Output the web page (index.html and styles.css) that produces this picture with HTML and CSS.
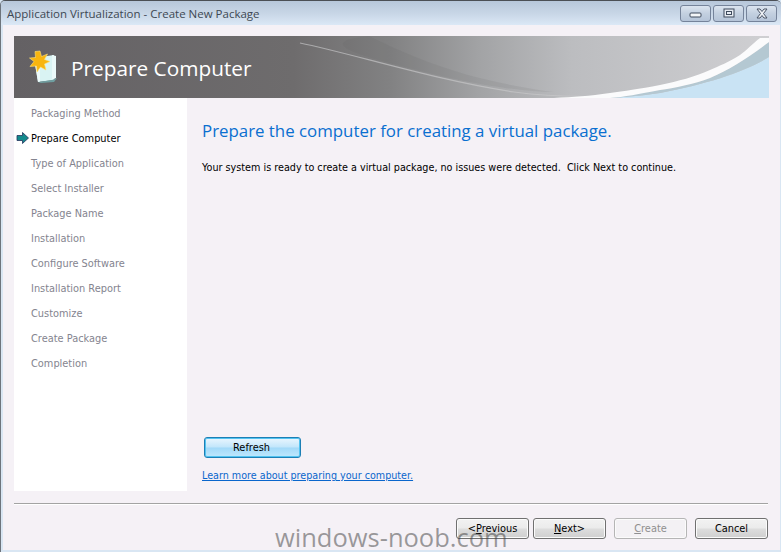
FILE: index.html
```html
<!DOCTYPE html>
<html lang="en">
<head>
<meta charset="utf-8">
<title>Application Virtualization - Create New Package</title>
<link rel="stylesheet" href="styles.css">
</head>
<body>
<div class="window">
  <div class="titlebar">
    <span class="title">Application Virtualization - Create New Package</span>
    <div class="controls">
      <span class="ctl"><svg width="14" height="8" viewBox="0 0 14 8"><rect x="1" y="3" width="11" height="4" rx="1" fill="#f4f6f8" stroke="#3e4a5c"/></svg></span>
      <span class="ctl"><svg width="14" height="12" viewBox="0 0 14 12"><rect x="2" y="1" width="10" height="8" fill="#e6ebf2" stroke="#3e4a5c"/><rect x="4.500" y="3.500" width="5" height="3" fill="none" stroke="#3e4a5c"/></svg></span>
      <span class="ctl"><svg width="14" height="12" viewBox="0 0 14 12"><path d="M2 1h3l2 2.500 2-2.500h3l-3.500 4.500 3.500 4.500h-3l-2-2.500-2 2.500h-3l3.500-4.500z" fill="#eef1f5" stroke="#4a5567"/></svg></span>
    </div>
  </div>
  <div class="client">
    <header class="banner">
      <svg class="banner-art" width="755" height="62" viewBox="0 0 755 62">
        <defs>
          <linearGradient id="bg" x1="0" x2="1" y1="0" y2="0">
            <stop offset="0" stop-color="#646164"/>
            <stop offset="0.37" stop-color="#6e6c6d"/>
            <stop offset="0.50" stop-color="#828283"/>
            <stop offset="0.62" stop-color="#a3a4a6"/>
            <stop offset="0.74" stop-color="#bcbdc0"/>
            <stop offset="1" stop-color="#cfcfd2"/>
          </linearGradient>
        </defs>
        <rect width="755" height="62" fill="url(#bg)"/>
        <path d="M355 0C400 22 450 44 540 56C500 56 440 44 395 32C340 18 300 6 355 0z" fill="#55585a" opacity="0.10"/>
        <path d="M286 7C340 18 420 44 500 56C530 60 560 61 590 60" fill="none" stroke="#c9cacb" stroke-width="1.200" opacity="0.65"/>
        <path d="M755 21C730 36 696 47 646 57C625 60 610 61 596 62H755z" fill="#c9e3f4"/>
        <path d="M755 6C735 21 715 34 696 42C680 48 660 52 646 54C625 57 610 59 596 60L596 62C610 61 625 60 646 57C696 47 730 36 755 21z" fill="#b4c8d2"/>
        <path d="M746 2C738 8 732 15 726 19C715 26 705 30 696 34C680 41 665 45 646 49C625 53 610 55 596 57C575 60 560 61 540 62H596C610 61 625 58 646 54C660 52 680 48 696 42C715 34 735 21 755 6V2z" fill="#fbfbfc"/>
      </svg>
      <svg class="banner-icon" width="32" height="34" viewBox="0 0 32 34">
        <path d="M6 8L26 5V30L10 32z" fill="#d9f3f3"/>
        <path d="M6 8L12 7V32H10z" fill="#eefbfb"/>
        <path d="M24 5L28 6V28L24 30z" fill="#eaf9f9"/>
        <path d="M10 32L24 30L29 28L26 32L13 33z" fill="#6f9ea0"/>
        <path d="M12 1l1.500 5.500 6-2.500-3 5.500 5.500 2-5.500 2.500 1.500 6-5.500-3-3.500 5-.5-6-6.500.5 4-5-4.500-3.500 6-.5-.5-6z" fill="#f8b50f" stroke="#fde27a" stroke-width="0.600"/>
      </svg>
      <h1 class="banner-title">Prepare Computer</h1>
    </header>
    <div class="main">
      <nav class="steps">
        <div class="step">Packaging Method</div>
        <div class="step current">
          <svg class="arrow" width="13" height="12" viewBox="0 0 13 12"><path d="M1 3.500H6.500V0.500L12.500 6L6.500 11.500V8.500H1z" fill="#138a8c" stroke="#24345e" stroke-width="0.800"/></svg>
          Prepare Computer
        </div>
        <div class="step">Type of Application</div>
        <div class="step">Select Installer</div>
        <div class="step">Package Name</div>
        <div class="step">Installation</div>
        <div class="step">Configure Software</div>
        <div class="step">Installation Report</div>
        <div class="step">Customize</div>
        <div class="step">Create Package</div>
        <div class="step">Completion</div>
      </nav>
      <section class="content">
        <h2 class="heading">Prepare the computer for creating a virtual package.</h2>
        <p class="message">Your system is ready to create a virtual package, no issues were detected.&nbsp; Click Next to continue.</p>
        <div class="spacer"></div>
        <button class="refresh" type="button">Refresh</button>
        <a class="learn" href="#">Learn more about preparing your computer.</a>
      </section>
    </div>
    <footer class="footer">
      <button class="btn" type="button">&lt;<span class="ul">P</span>revious</button>
      <button class="btn" type="button"><span class="ul">N</span>ext&gt;</button>
      <button class="btn create" type="button" disabled><span class="ul">C</span>reate</button>
      <button class="btn" type="button">Cancel</button>
    </footer>
  </div>
  <div class="watermark">windows-noob.com</div>
</div>
</body>
</html>
```
FILE: styles.css
```css
* { box-sizing: border-box; }
html, body { margin: 0; padding: 0; }
body { width: 781px; height: 552px; overflow: hidden; background: #d6e4f2; font-family: "DejaVu Sans", Verdana, sans-serif; }
.window { position: relative; width: 781px; height: 552px; display: flex; flex-direction: column; border-top: 1px solid #4b4f55; border-left: 1px solid #6d747c; border-radius: 5px 5px 0 0; overflow: hidden; background: #d9e6f3; }
.titlebar { height: 24px; flex: none; display: flex; justify-content: space-between; padding: 0 4px 0 6px; background: linear-gradient(180deg, #b7c7da 0%, #c9d7e7 55%, #dbe8f6 100%); }
.title { font-family: "Open Sans", sans-serif; font-size: 11.5px; line-height: 26px; color: #3d4853; white-space: nowrap; }
.controls { display: flex; gap: 2px; padding-top: 4px; }
.ctl { width: 31px; height: 17px; display: flex; align-items: center; justify-content: center; border: 1px solid #75839a; border-radius: 3px; background: linear-gradient(180deg, #dbe4ef 0%, #c3d0e0 50%, #b5c4d8 100%); }
.client { flex: 1; margin: 0 1px 2px 2px; padding: 11px 10px 0 11px; background: #f5f1f6; display: flex; flex-direction: column; }
.banner { position: relative; flex: none; width: 755px; height: 62px; display: flex; align-items: center; padding: 2px 0 0 57px; }
.banner-art { position: absolute; left: 0; top: 0; }
.banner-icon { position: absolute; left: 14px; top: 14px; }
.banner-title { position: relative; margin: 0; font-family: "Open Sans", sans-serif; font-weight: 400; font-size: 20.800px; color: #fff; line-height: 60px; }
.main { flex: none; height: 393px; display: flex; }
.steps { width: 173px; flex: none; background: #fff; padding-top: 4px; }
.step { position: relative; height: 25px; padding-left: 17px; font-size: 9.800px; line-height: 24px; color: #84848f; white-space: nowrap; }
.step.current { color: #000; }
.arrow { position: absolute; left: 2px; top: 5px; }
.content { flex: 1; display: flex; flex-direction: column; align-items: flex-start; padding: 0 0 8px 15px; }
.heading { margin: 21px 0 0; font-family: "Open Sans", sans-serif; font-weight: 400; font-size: 16.850px; line-height: 24px; color: #0a6fd0; white-space: nowrap; }
.message { margin: 18px 0 0; font-size: 9.630px; line-height: 14px; color: #000; white-space: nowrap; }
.spacer { flex: 1; }
.refresh { width: 97px; height: 21px; margin: 0 0 0 2px; padding: 0 2px 0 0; font-family: "DejaVu Sans", sans-serif; font-size: 9.800px; color: #000; border: 1px solid #1c7fb5; border-radius: 3px; background: linear-gradient(180deg, #eaf6fe 0%, #c2e6fb 48%, #a2d9f8 52%, #bfe8fd 100%); box-shadow: inset 0 0 0 1px #52c3f0; }
.learn { margin-top: 11px; font-size: 9.600px; line-height: 14px; color: #0a66cc; text-decoration: underline; white-space: nowrap; }
.footer { flex: none; width: 754px; margin-top: 12px; padding-top: 14px; border-top: 1px solid #a3a3a3; display: flex; justify-content: flex-end; gap: 4px; box-shadow: inset 0 1px 0 #fff; }
.btn { width: 73px; height: 21px; padding: 0; font-family: "DejaVu Sans", sans-serif; font-size: 9.800px; color: #000; border: 1px solid #707070; border-radius: 3px; background: linear-gradient(180deg, #f2f2f2 0%, #ebebeb 48%, #dddddd 52%, #cfcfcf 100%); box-shadow: inset 0 0 0 1px #fbfbfb; }
.ul { text-decoration: underline; }
.create { margin: 0 4px; color: #8f8f8f; border-color: #b5b5b5; background: #f3f1f4; }
.watermark { position: absolute; left: 274px; top: 519px; font-family: "Open Sans", sans-serif; font-size: 25.500px; line-height: 34px; color: rgba(60, 60, 60, 0.5); white-space: nowrap; pointer-events: none; }
```
